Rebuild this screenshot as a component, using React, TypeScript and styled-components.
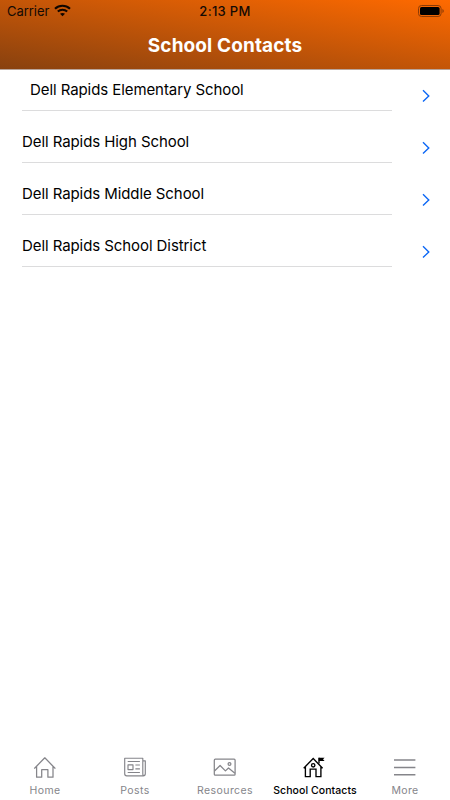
import React from "react";
import styled, { createGlobalStyle } from "styled-components";

const GlobalStyle = createGlobalStyle`
  * { box-sizing: border-box; }
  body { margin: 0; background: #fff; }
`;

const Screen = styled.div`
  width: 450px;
  height: 800px;
  display: flex;
  flex-direction: column;
  background: #fff;
  color: #000;
  font-family: Inter, "Liberation Sans", sans-serif;
  overflow: hidden;
`;

const Header = styled.header`
  height: 70px;
  flex: none;
  background: linear-gradient(to bottom left, #ff6a00, #88410f);
  border-bottom: 1px solid #b9a59b;
`;

const StatusBar = styled.div`
  height: 23px;
  display: grid;
  grid-template-columns: 1fr auto 1fr;
  align-items: center;
  padding: 0 7px;
  font-size: 13px;
  line-height: 23px;
  color: #140a04;
`;

const Carrier = styled.div`
  display: flex;
  align-items: center;
  gap: 5px;
  letter-spacing: -0.05px;
  svg { display: block; margin-top: -2px; }
`;

const Clock = styled.div`
  font-weight: 500;
  letter-spacing: 0.3px;
`;

const Battery = styled.div`
  display: flex;
  justify-content: flex-end;
  svg { display: block; margin: -1px -1px 0 0; }
`;

const Title = styled.h1`
  margin: 0;
  height: 46px;
  line-height: 45px;
  text-align: center;
  color: #fff;
  font-size: 19px;
  font-weight: 700;
  letter-spacing: 0.12px;
`;

const List = styled.ul`
  flex: 1;
  margin: 0;
  padding: 0 0 0 22px;
  list-style: none;
`;

const Row = styled.li`
  display: flex;
  height: 52.15px;
  &:first-child { height: 41px; }
  &:first-child > div { padding-left: 8px; }
`;

const Label = styled.div`
  width: 370px;
  display: flex;
  align-items: flex-end;
  padding-bottom: 10px;
  border-bottom: 1px solid #dcdcdd;
  font-size: 15px;
  line-height: 20px;
  letter-spacing: -0.08px;
  white-space: nowrap;
`;

const Disclosure = styled.span`
  display: flex;
  align-items: flex-end;
  padding: 0 0 8px 30px;
  svg { display: block; }
`;

const TabBar = styled.nav`
  height: 49px;
  flex: none;
  display: grid;
  grid-template-columns: repeat(5, 90px);
`;

const Tab = styled.div<{ $active?: boolean }>`
  display: flex;
  flex-direction: column;
  align-items: center;
  color: ${(p) => (p.$active ? "#000" : "#85858a")};
  font-size: 10.5px;
  font-weight: ${(p) => (p.$active ? 500 : 400)};
  line-height: 14px;
  white-space: nowrap;
  svg { display: block; margin: 4px 0 5px; }
`;

const TabText = styled.span<{ $spacing: number }>`
  letter-spacing: ${(p) => p.$spacing}px;
`;

const Wifi = () => (
  <svg width="17" height="13" viewBox="0 0 17 13" fill="none" stroke="#100600">
    <path d="M1 4.7C5.2.7 11.8.7 16 4.7" strokeWidth="2.1" />
    <path d="M3.8 7.5c2.7-2.5 6.7-2.5 9.4 0" strokeWidth="2" />
    <path d="M8.5 12.2 6 9.8c1.5-1.2 3.5-1.2 5 0z" fill="#100600" stroke="none" />
  </svg>
);

const BatteryIcon = () => (
  <svg width="26" height="12" viewBox="0 0 26 12" fill="none">
    <rect x=".5" y=".5" width="22.6" height="11" rx="3" stroke="#8c3b05" />
    <rect x="2" y="2" width="19.6" height="8" rx="1.6" fill="#000" />
    <path d="M24.5 4v4c.8-.4 1.2-1.1 1.2-2s-.4-1.6-1.2-2z" fill="#7d3406" />
  </svg>
);

const Chevron = () => (
  <svg width="8" height="14" viewBox="0 0 8 14" fill="none" stroke="#0a66f5" strokeWidth="1.35">
    <path d="m1 1.2 5.8 5.7L1 12.6" />
  </svg>
);

const iconProps = { width: 24, height: 24, viewBox: "0 0 24 24", fill: "none", stroke: "currentColor", strokeWidth: 1.25 };

const HomeIcon = () => (
  <svg {...iconProps} strokeLinejoin="round" strokeLinecap="round">
    <path d="M1.6 13.2 11.8 2.8l10.2 10.4M3.6 11.5v10.7h5.1v-7.5h6.2v7.5h5.1V11.5" />
  </svg>
);

const PostsIcon = () => (
  <svg {...iconProps} strokeWidth="1.15" strokeLinejoin="round">
    <path d="M19.8 19.8V3.2H1.7v15.6c0 1.2.8 2 2 2h16.6c1.2 0 2-.8 2-2V5.8h-2.5M19.8 18.8c0 1.3.6 2 1.2 2" />
    <path d="M4.7 6.5h12.2M4.7 17.5h12.2M12.4 10h4.5M12.4 13.9h4.5M5 9.9h5v4.7H5z" />
  </svg>
);

const ResourcesIcon = () => (
  <svg {...iconProps} strokeLinejoin="round">
    <rect x="1.3" y="4.2" width="20.8" height="16" rx="1" />
    <path d="m1.5 16 5.6-5.5 5.3 5.4 3.1-2.9 6.4 5.2" />
    <circle cx="16.5" cy="9" r="1.4" />
  </svg>
);

const SchoolIcon = () => (
  <svg {...iconProps} strokeWidth="1.35">
    <path d="M.7 13.2 10.2 3.5l9.4 9.7M2.4 11.7v9.9h4.8v-7.4H13v7.4h4.9v-9.9" />
    <circle cx="10.2" cy="10.3" r="1.7" />
    <path d="M16 8.5V2.7" />
    <path d="M15.7 2.7h5.9L20 4.3 21.6 6h-5.9z" fill="currentColor" stroke="none" />
  </svg>
);

const MoreIcon = () => (
  <svg {...iconProps} strokeWidth="1.5">
    <path d="M1 4.9h21.4M1 12.4h21.4M1 19.8h21.4" />
  </svg>
);

const schools = [
  "Dell Rapids Elementary School",
  "Dell Rapids High School",
  "Dell Rapids Middle School",
  "Dell Rapids School District",
];

const tabs = [
  { name: "Home", Icon: HomeIcon, spacing: 0.4 },
  { name: "Posts", Icon: PostsIcon, spacing: 0.4 },
  { name: "Resources", Icon: ResourcesIcon, spacing: 0.43 },
  { name: "School Contacts", Icon: SchoolIcon, spacing: 0.08 },
  { name: "More", Icon: MoreIcon, spacing: 0.35 },
];

export default function App() {
  return (
    <Screen>
      <GlobalStyle />
      <Header>
        <StatusBar>
          <Carrier>Carrier <Wifi /></Carrier>
          <Clock>2:13 PM</Clock>
          <Battery><BatteryIcon /></Battery>
        </StatusBar>
        <Title>School Contacts</Title>
      </Header>
      <List>
        {schools.map((name) => (
          <Row key={name}>
            <Label>{name}</Label>
            <Disclosure><Chevron /></Disclosure>
          </Row>
        ))}
      </List>
      <TabBar>
        {tabs.map(({ name, Icon, spacing }) => (
          <Tab key={name} $active={name === "School Contacts"}>
            <Icon />
            <TabText $spacing={spacing}>{name}</TabText>
          </Tab>
        ))}
      </TabBar>
    </Screen>
  );
}
